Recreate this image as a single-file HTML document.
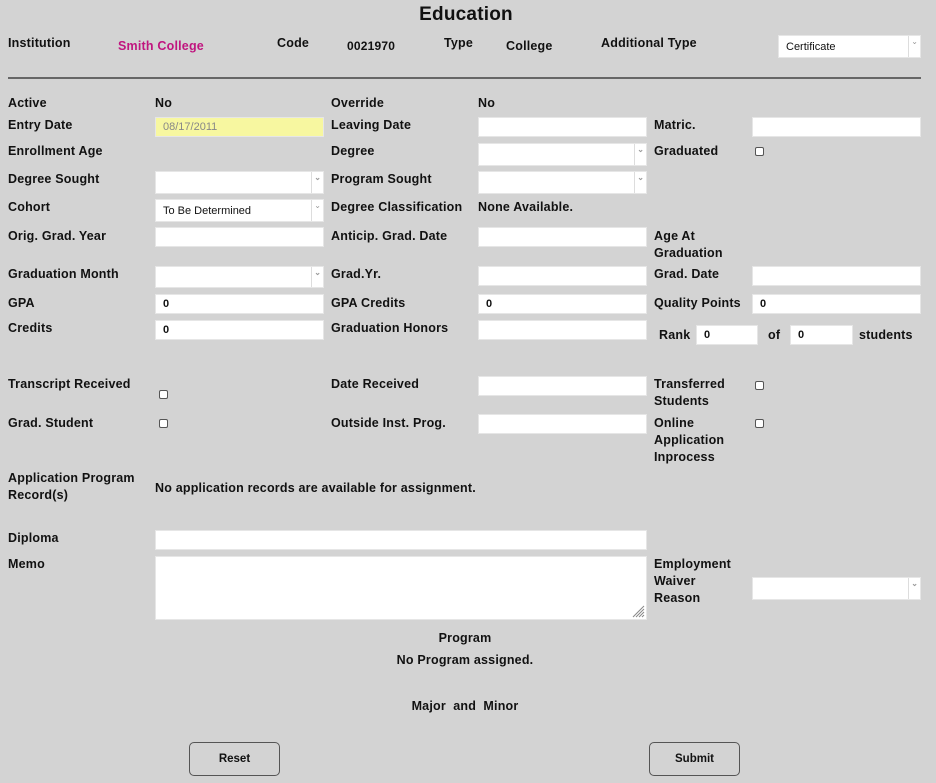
<!DOCTYPE html>
<html><head><meta charset="utf-8"><style>
body{margin:0;width:936px;height:783px;background:#d3d3d3;position:relative;overflow:hidden;font-family:"Liberation Sans",sans-serif;color:#111}
.l{position:absolute;font-weight:bold;font-size:12.5px;line-height:17px;white-space:nowrap;letter-spacing:0.2px}
.i{position:absolute;background:#fff;box-sizing:border-box;border:1px solid #e6e6e6;font-size:11px;padding-left:7px;display:flex;align-items:center;font-weight:bold}
.s::after{content:"";position:absolute;right:0;top:0;bottom:0;width:11px;border-left:1px solid #ddd}
.s::before{content:"⌄";position:absolute;right:2px;top:1px;font-size:8px;color:#999}
.c{position:absolute;width:9px;height:9px;background:#fff;border:1px solid #555;border-radius:2px;box-sizing:border-box}
.b{position:absolute;width:91px;height:34px;border:1px solid #555;border-radius:5px;box-sizing:border-box;font-weight:bold;font-size:11.5px;display:flex;align-items:center;justify-content:center}
</style></head><body>
<div class="l" style="left:0;width:932px;text-align:center;top:3px;font-size:19px;line-height:24px">Education</div>
<div class="l" style="left:8px;top:35px">Institution</div>
<div class="l" style="left:118px;top:38px;color:#c0157f">Smith College</div>
<div class="l" style="left:277px;top:35px">Code</div>
<div class="l" style="left:347px;top:38px;font-size:12px">0021970</div>
<div class="l" style="left:444px;top:35px">Type</div>
<div class="l" style="left:506px;top:38px">College</div>
<div class="l" style="left:601px;top:35px">Additional Type</div>
<div class="i s" style="left:778px;top:35px;width:143px;height:23px;font-weight:normal">Certificate</div>
<div style="position:absolute;left:8px;top:77px;width:913px;height:2px;background:#666"></div>

<div class="l" style="left:8px;top:95px">Active</div>
<div class="l" style="left:155px;top:95px">No</div>
<div class="l" style="left:331px;top:95px">Override</div>
<div class="l" style="left:478px;top:95px">No</div>

<div class="l" style="left:8px;top:117px">Entry Date</div>
<div class="i" style="left:155px;top:117px;width:169px;height:20px;background:#f7f7a0;color:#888;font-weight:normal">08/17/2011</div>
<div class="l" style="left:331px;top:117px">Leaving Date</div>
<div class="i" style="left:478px;top:117px;width:169px;height:20px"></div>
<div class="l" style="left:654px;top:117px">Matric.</div>
<div class="i" style="left:752px;top:117px;width:169px;height:20px"></div>

<div class="l" style="left:8px;top:143px">Enrollment Age</div>
<div class="l" style="left:331px;top:143px">Degree</div>
<div class="i s" style="left:478px;top:143px;width:169px;height:23px"></div>
<div class="l" style="left:654px;top:143px">Graduated</div>
<div class="c" style="left:755px;top:147px"></div>

<div class="l" style="left:8px;top:171px">Degree Sought</div>
<div class="i s" style="left:155px;top:171px;width:169px;height:23px"></div>
<div class="l" style="left:331px;top:171px">Program Sought</div>
<div class="i s" style="left:478px;top:171px;width:169px;height:23px"></div>

<div class="l" style="left:8px;top:199px">Cohort</div>
<div class="i s" style="left:155px;top:199px;width:169px;height:23px;font-weight:normal">To Be Determined</div>
<div class="l" style="left:331px;top:199px">Degree Classification</div>
<div class="l" style="left:478px;top:199px">None Available.</div>

<div class="l" style="left:8px;top:228px">Orig. Grad. Year</div>
<div class="i" style="left:155px;top:227px;width:169px;height:20px"></div>
<div class="l" style="left:331px;top:228px">Anticip. Grad. Date</div>
<div class="i" style="left:478px;top:227px;width:169px;height:20px"></div>
<div class="l" style="left:654px;top:228px">Age At<br>Graduation</div>

<div class="l" style="left:8px;top:266px">Graduation Month</div>
<div class="i s" style="left:155px;top:266px;width:169px;height:22px"></div>
<div class="l" style="left:331px;top:266px">Grad.Yr.</div>
<div class="i" style="left:478px;top:266px;width:169px;height:20px"></div>
<div class="l" style="left:654px;top:266px">Grad. Date</div>
<div class="i" style="left:752px;top:266px;width:169px;height:20px"></div>

<div class="l" style="left:8px;top:295px">GPA</div>
<div class="i" style="left:155px;top:294px;width:169px;height:20px">0</div>
<div class="l" style="left:331px;top:295px">GPA Credits</div>
<div class="i" style="left:478px;top:294px;width:169px;height:20px">0</div>
<div class="l" style="left:654px;top:295px">Quality Points</div>
<div class="i" style="left:752px;top:294px;width:169px;height:20px">0</div>

<div class="l" style="left:8px;top:320px">Credits</div>
<div class="i" style="left:155px;top:320px;width:169px;height:20px">0</div>
<div class="l" style="left:331px;top:320px">Graduation Honors</div>
<div class="i" style="left:478px;top:320px;width:169px;height:20px"></div>
<div class="l" style="left:659px;top:327px">Rank</div>
<div class="i" style="left:696px;top:325px;width:62px;height:20px">0</div>
<div class="l" style="left:768px;top:327px">of</div>
<div class="i" style="left:790px;top:325px;width:63px;height:20px">0</div>
<div class="l" style="left:859px;top:327px">students</div>

<div class="l" style="left:8px;top:376px">Transcript Received</div>
<div class="c" style="left:159px;top:390px"></div>
<div class="l" style="left:331px;top:376px">Date Received</div>
<div class="i" style="left:478px;top:376px;width:169px;height:20px"></div>
<div class="l" style="left:654px;top:376px">Transferred<br>Students</div>
<div class="c" style="left:755px;top:381px"></div>

<div class="l" style="left:8px;top:415px">Grad. Student</div>
<div class="c" style="left:159px;top:419px"></div>
<div class="l" style="left:331px;top:415px">Outside Inst. Prog.</div>
<div class="i" style="left:478px;top:414px;width:169px;height:20px"></div>
<div class="l" style="left:654px;top:415px">Online<br>Application<br>Inprocess</div>
<div class="c" style="left:755px;top:419px"></div>

<div class="l" style="left:8px;top:470px">Application Program<br>Record(s)</div>
<div class="l" style="left:155px;top:480px">No application records are available for assignment.</div>

<div class="l" style="left:8px;top:530px">Diploma</div>
<div class="i" style="left:155px;top:530px;width:492px;height:20px"></div>
<div class="l" style="left:8px;top:556px">Memo</div>
<div class="i" style="left:155px;top:556px;width:492px;height:64px"></div>
<svg style="position:absolute;left:632px;top:605px" width="13" height="13"><path d="M12 1L1 12M12 4L4 12M12 7L7 12M12 10L10 12" stroke="#888" stroke-width="1"/></svg>
<div class="l" style="left:654px;top:556px">Employment<br>Waiver<br>Reason</div>
<div class="i s" style="left:752px;top:577px;width:169px;height:23px"></div>

<div class="l" style="left:0;width:930px;text-align:center;top:630px">Program</div>
<div class="l" style="left:0;width:930px;text-align:center;top:652px">No Program assigned.</div>
<div class="l" style="left:0;width:930px;text-align:center;top:698px">Major&nbsp; and&nbsp; Minor</div>

<div class="b" style="left:189px;top:742px">Reset</div>
<div class="b" style="left:649px;top:742px">Submit</div>
</body></html>
